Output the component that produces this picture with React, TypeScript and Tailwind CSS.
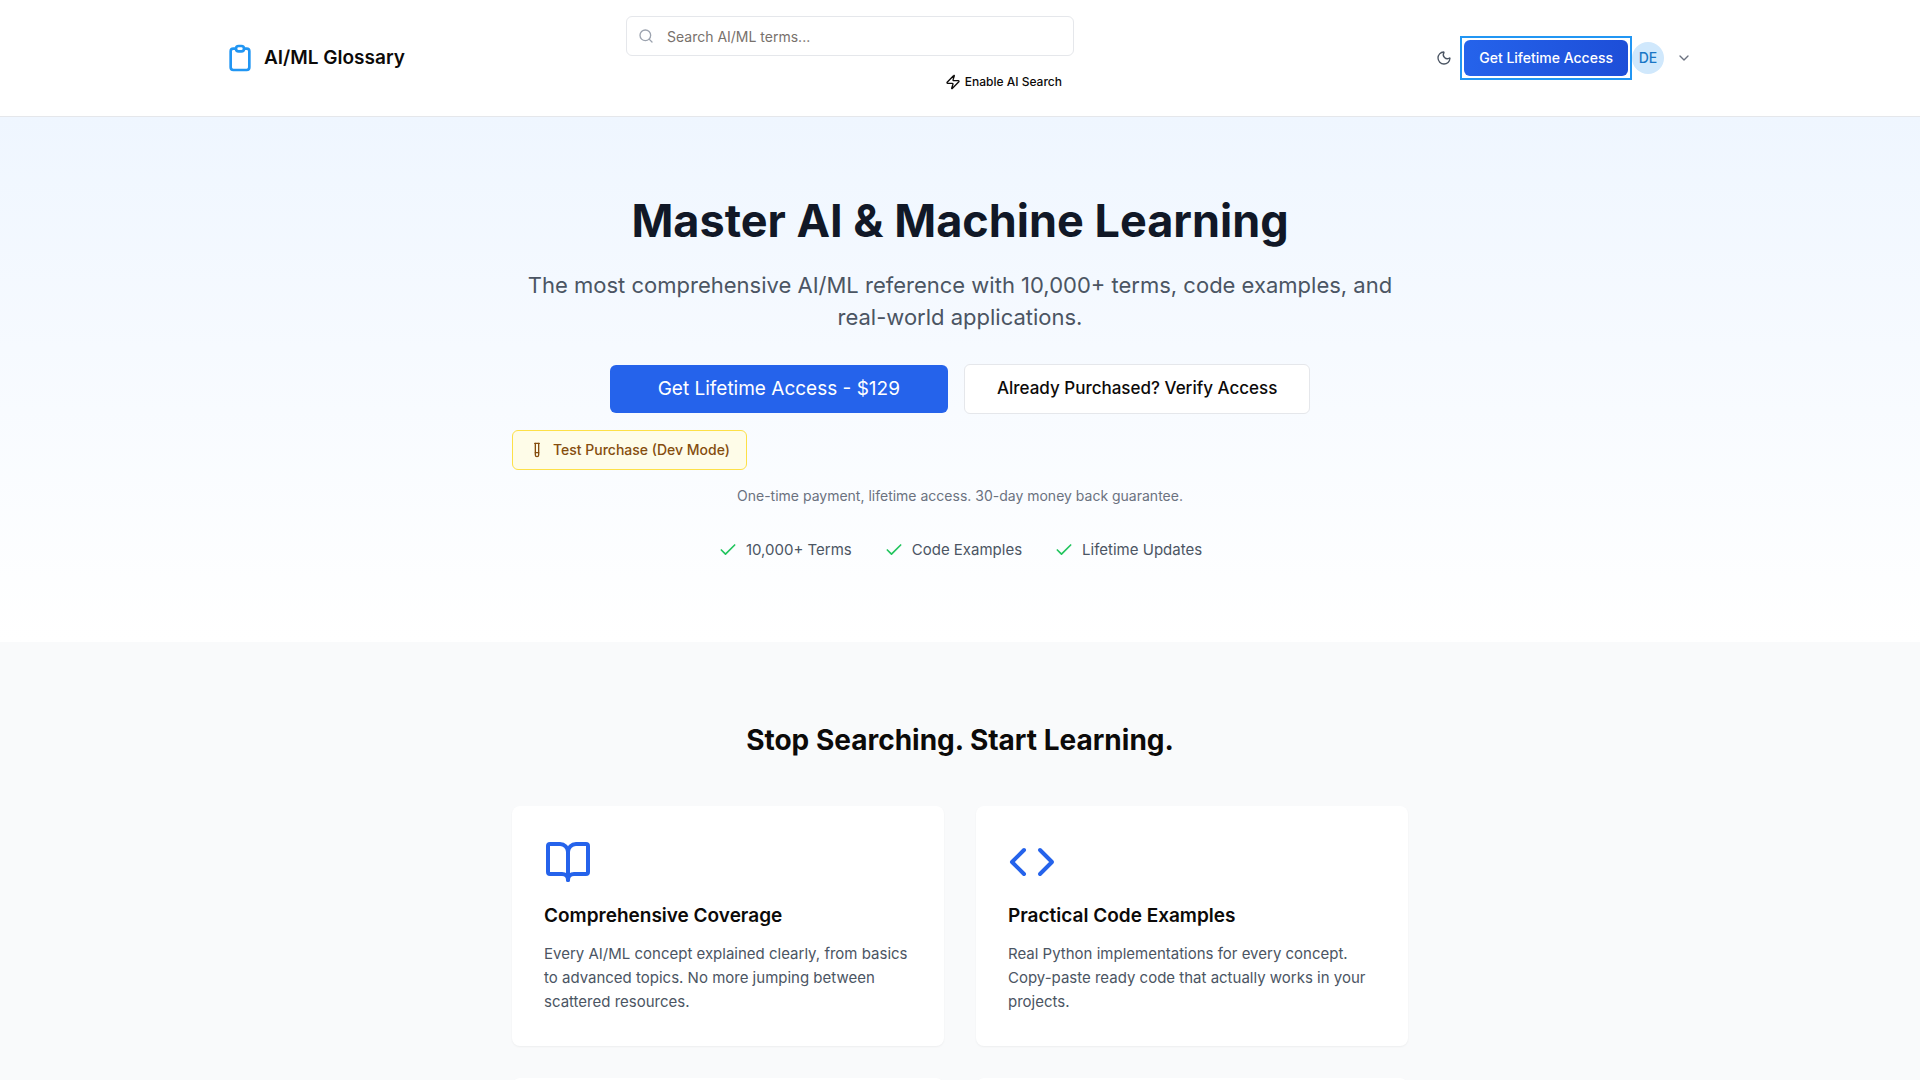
import type { ReactNode } from "react";
import { BookOpen, Check, ChevronDown, Code, Moon, Search } from "lucide-react";

function ClipboardIcon() {
  return (
    <svg className="size-8 text-[#2196f3]" viewBox="0 0 24 24" fill="none" stroke="currentColor" strokeWidth="2" strokeLinecap="round" strokeLinejoin="round" aria-hidden="true">
      <path d="M9 5H7a2 2 0 00-2 2v12a2 2 0 002 2h10a2 2 0 002-2V7a2 2 0 00-2-2h-2M9 5a2 2 0 002 2h2a2 2 0 002-2M9 5a2 2 0 012-2h2a2 2 0 012 2" />
    </svg>
  );
}

function ZapIcon() {
  return (
    <svg className="size-4" viewBox="0 0 24 24" fill="none" stroke="currentColor" strokeWidth="2" strokeLinecap="round" strokeLinejoin="round" aria-hidden="true">
      <path d="M4 14a1 1 0 0 1-.78-1.63l9.9-10.2a.5.5 0 0 1 .86.46l-1.92 6.02A1 1 0 0 0 13 10h7a1 1 0 0 1 .78 1.63l-9.9 10.2a.5.5 0 0 1-.86-.46l1.92-6.02A1 1 0 0 0 11 14z" />
    </svg>
  );
}

function TestTubeIcon() {
  return (
    <svg className="size-4" viewBox="0 0 24 24" fill="none" stroke="currentColor" strokeWidth="2" strokeLinecap="round" strokeLinejoin="round" aria-hidden="true">
      <path d="M14.5 2v17.5c0 1.4-1.1 2.5-2.5 2.5s-2.5-1.1-2.5-2.5V2" />
      <path d="M8.5 2h7" />
      <path d="M14.5 16h-5" />
    </svg>
  );
}

function Header() {
  return (
    <header className="border-b border-[#e5e7eb] bg-white">
      <div className="mx-auto flex max-w-[1536px] items-center justify-between px-8 py-4">
        <a href="#" className="flex flex-1 items-center gap-2 text-[19px] font-semibold text-[#0c0a09]">
          <ClipboardIcon />
          AI/ML Glossary
        </a>
        <div className="mr-55 flex w-full max-w-md flex-col items-end gap-2">
          <div className="relative w-full">
            <Search className="absolute top-3 left-3 size-4 text-[#9ca3af]" />
            <input
              type="search"
              aria-label="Search AI/ML terms"
              placeholder="Search AI/ML terms..."
              className="h-10 w-full rounded-md border border-[#e5e7eb] bg-white pr-3 pl-10 text-sm text-[#0c0a09] placeholder:text-[#78716c]"
            />
          </div>
          <button type="button" className="flex h-9 items-center gap-1 rounded-md px-3 text-xs font-medium text-[#0c0a09]">
            <ZapIcon />
            Enable AI Search
          </button>
        </div>
        <div className="flex flex-1 items-center justify-end">
          <button type="button" aria-label="Toggle dark mode" className="mr-2 text-[#4b5563]">
            <Moon className="size-4" />
          </button>
          <div className="border-2 border-[#2196f3] p-0.5">
            <button
              type="button"
              className="block h-9 rounded-md bg-linear-to-r/srgb from-[#2563eb] to-[#1d4ed8] px-[15px] text-sm font-medium whitespace-nowrap text-white"
            >
              Get Lifetime Access
            </button>
          </div>
          <button type="button" aria-label="Account menu" className="flex items-center gap-3 pr-1">
            <span className="flex size-8 items-center justify-center rounded-full bg-[#d0e8fc] text-sm font-medium text-[#1976c5]">DE</span>
            <ChevronDown className="size-4 text-[#6b7280]" />
          </button>
        </div>
      </div>
    </header>
  );
}

const highlights = ["10,000+ Terms", "Code Examples", "Lifetime Updates"];

function Hero() {
  return (
    <section className="bg-linear-to-b/srgb from-[#eff6ff] to-white py-20">
      <div className="mx-auto max-w-4xl text-center">
        <h1 className="mb-6 text-[45px] leading-[48px] font-bold text-[#111827]">Master AI &amp; Machine Learning</h1>
        <p className="mb-[31px] text-[22px] leading-8 text-[#4b5563]">
          The most comprehensive AI/ML reference with 10,000+ terms, code examples, and real-world applications.
        </p>
        <div className="mb-4 flex items-center justify-center gap-4">
          <button type="button" className="h-12 rounded-md bg-[#2563eb] px-12 text-[19px] text-white">
            Get Lifetime Access - $129
          </button>
          <button type="button" className="h-[50px] rounded-md border border-[#e5e7eb] bg-white px-8 text-[17px] font-medium text-[#0c0a09]">
            Already Purchased? Verify Access
          </button>
        </div>
        <button type="button" className="mb-4 flex h-10 items-center gap-2 rounded-md border border-[#fde047] bg-[#fefce8] px-4 text-sm font-medium text-[#854d0e]">
          <TestTubeIcon />
          Test Purchase (Dev Mode)
        </button>
        <p className="mb-8 text-sm text-[#6b7280]">One-time payment, lifetime access. 30-day money back guarantee.</p>
        <ul className="flex items-center justify-center gap-8 text-[15px] leading-6 text-[#4b5563]">
          {highlights.map((label) => (
            <li key={label} className="flex items-center gap-2">
              <Check className="size-5 text-[#22c55e]" />
              {label}
            </li>
          ))}
        </ul>
      </div>
    </section>
  );
}

function Card({ icon, title, children }: { icon?: ReactNode; title?: string; children?: ReactNode }) {
  return (
    <article className="min-h-60 rounded-lg bg-white p-8 shadow-xs">
      {icon}
      {title && <h3 className="mt-4 mb-3 text-[19px] leading-7 font-semibold text-[#0c0a09]">{title}</h3>}
      {children && <p className="text-[15px] leading-6 text-[#4b5563]">{children}</p>}
    </article>
  );
}

function Features() {
  return (
    <section className="bg-[#f9fafb] py-20">
      <div className="mx-auto max-w-4xl">
        <h2 className="mb-12 text-center text-[28px] leading-9 font-bold text-[#0c0a09]">Stop Searching. Start Learning.</h2>
        <div className="grid grid-cols-2 gap-8">
          <Card icon={<BookOpen className="size-12 text-[#2563eb]" />} title="Comprehensive Coverage">
            Every AI/ML concept explained clearly, from basics to advanced topics. No more jumping between scattered resources.
          </Card>
          <Card icon={<Code className="size-12 text-[#2563eb]" />} title="Practical Code Examples">
            Real Python implementations for every concept. Copy-paste ready code that actually works in your projects.
          </Card>
          <Card />
          <Card />
        </div>
      </div>
    </section>
  );
}

export default function App() {
  return (
    <div className="h-screen overflow-hidden bg-white font-[Inter,sans-serif]">
      <Header />
      <main>
        <Hero />
        <Features />
      </main>
    </div>
  );
}
